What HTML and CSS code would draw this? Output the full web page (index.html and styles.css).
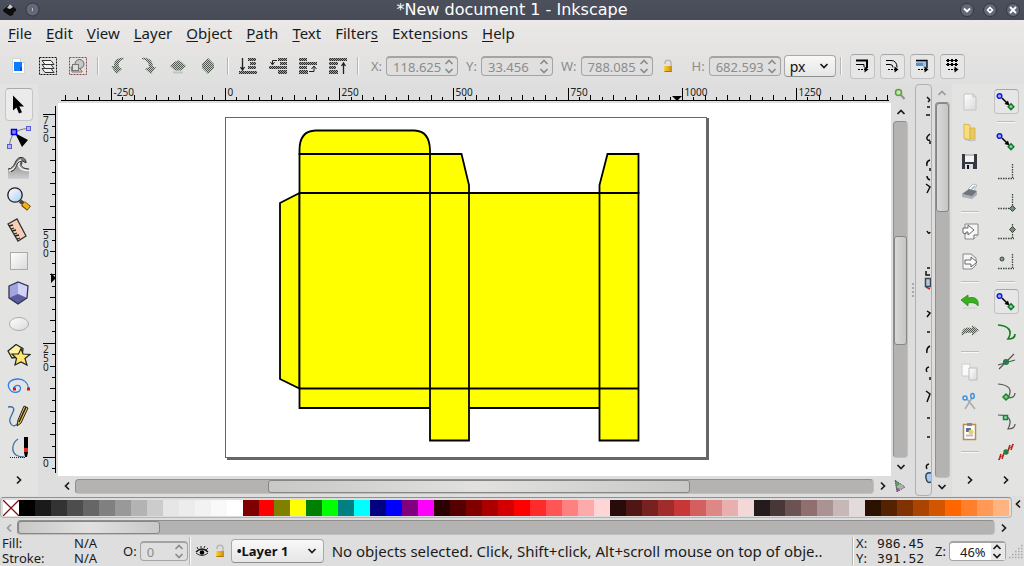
FILE: index.html
```html
<!DOCTYPE html>
<html lang="en">
<head>
<meta charset="utf-8">
<title>*New document 1 - Inkscape</title>
<link rel="stylesheet" href="styles.css">
</head>
<body>
<svg class="defs" aria-hidden="true">
  <defs>
    <pattern id="dither" width="2" height="2" patternUnits="userSpaceOnUse"><rect width="2" height="2" fill="#c6c8c6"/><rect width="1" height="1" fill="#505850"/><rect x="1" y="1" width="1" height="1" fill="#505850"/></pattern>
    <pattern id="ditherDark" width="2" height="2" patternUnits="userSpaceOnUse"><rect width="2" height="2" fill="#9a9a9a"/><rect width="1" height="1" fill="#2c2c2c"/><rect x="1" y="1" width="1" height="1" fill="#2c2c2c"/></pattern>
    <linearGradient id="gold" x1="0" x2="1"><stop offset="0" stop-color="#f7d34a"/><stop offset="1" stop-color="#d08a00"/></linearGradient>
    <linearGradient id="glass" x1="0" y1="0" x2="1" y2="1"><stop offset="0" stop-color="#ffffff"/><stop offset="1" stop-color="#a9cdf2"/></linearGradient>
    <linearGradient id="paper" x1="0" y1="0" x2="1" y2="1"><stop offset="0" stop-color="#ffffff"/><stop offset="1" stop-color="#d9d9d9"/></linearGradient>
    <linearGradient id="wave" x1="0" y1="0" x2="0" y2="1"><stop offset="0" stop-color="#777"/><stop offset="1" stop-color="#d0d0d0"/></linearGradient>
    <symbol id="up" viewBox="0 0 10 8"><path d="M1.500 6L5 2.500 8.500 6" fill="none" stroke="currentColor" stroke-width="1.700"/></symbol>
    <symbol id="down" viewBox="0 0 10 8"><path d="M1.500 2L5 5.500 8.500 2" fill="none" stroke="currentColor" stroke-width="1.700"/></symbol>
    <symbol id="left" viewBox="0 0 8 10"><path d="M6 1.500L2.500 5 6 8.500" fill="none" stroke="currentColor" stroke-width="1.700"/></symbol>
    <symbol id="right" viewBox="0 0 8 10"><path d="M2 1.500L5.500 5 2 8.500" fill="none" stroke="currentColor" stroke-width="1.700"/></symbol>
    <symbol id="lock" viewBox="0 0 10 14"><path d="M2 5V4a3 2.700 0 0 1 6 0V7" fill="none" stroke="#b9b9b0" stroke-width="1.500"/><rect x="1" y="7" width="8" height="6" fill="url(#gold)"/><path d="M1.500 12.500h7" stroke="#b37400"/></symbol>
    <symbol id="snap" viewBox="0 0 24 24"><path d="M8 8l5 5" stroke="#000" stroke-width="1.500"/><path d="M15.500 15.500l-5-1.500 3.500-3.500z"/><circle cx="5.500" cy="6" r="2.300" fill="#9db4f5" stroke="#1a1ae0" stroke-width="1.500"/><path d="M17 13.800l2.800 2.900L17 19.600l-2.800-2.900z" fill="#8fd3a0" stroke="#0c7a28" stroke-width="1.500"/></symbol>
    <symbol id="corner" viewBox="0 0 24 24"><path d="M4 18.500h16M18.500 4v15" fill="none" stroke="#3c4a3c" stroke-width="1.300" stroke-dasharray="1.500 1"/></symbol>
  </defs>
</svg>

<div class="window">
  <header class="title-bar">
    <div class="title-left">
      <svg width="40" height="20"><path d="M10 4l6 5q1 2-2 3l-1 3-3 1-3-2-3-2q-2-2 0-3z" fill="#0d0d0d"/><path d="M10 4l3 3-3 2-3-1z" fill="#c8c8c8"/><circle cx="32.500" cy="9.500" r="6.500" fill="#636979" stroke="#333743"/><path d="M32.500 8v3" stroke="#b8bcc8"/></svg>
    </div>
    <h1>*New document 1 - Inkscape</h1>
    <div class="title-right">
      <button aria-label="Minimize"><svg width="16" height="16"><circle cx="8" cy="8" r="6.500" fill="#636979" stroke="#333743"/><path d="M5 6.500l3 3 3-3" fill="none" stroke="#fff" stroke-width="1.800"/></svg></button>
      <button aria-label="Maximize"><svg width="16" height="16"><circle cx="8" cy="8" r="6.500" fill="#636979" stroke="#333743"/><path d="M8 5.500l2.500 2.500L8 10.500 5.500 8z" fill="none" stroke="#fff" stroke-width="1.600"/></svg></button>
      <button aria-label="Close"><svg width="16" height="16"><circle cx="8" cy="8" r="6.500" fill="#636979" stroke="#333743"/><path d="M5 5l6 6M11 5l-6 6" stroke="#fff" stroke-width="1.800"/></svg></button>
    </div>
  </header>

  <nav class="menu-bar">
    <button><u>F</u>ile</button><button><u>E</u>dit</button><button><u>V</u>iew</button><button><u>L</u>ayer</button><button><u>O</u>bject</button><button><u>P</u>ath</button><button><u>T</u>ext</button><button>Filter<u>s</u></button><button>Exte<u>n</u>sions</button><button><u>H</u>elp</button>
  </nav>

  <div class="toolbar">
    <div class="group">
      <button aria-label="Select all"><svg width="24" height="24"><path d="M6.500 4.500h8l4 4v11h-12z" fill="#fff" stroke="#d5d5d5"/><path d="M14.500 4.500v4h4" fill="#eee" stroke="#ccc"/><rect x="8" y="8" width="8" height="9" fill="#0a7cff"/><path d="M14 13h2v4h-2z" fill="#0050d0"/></svg></button>
      <button aria-label="Select all in all layers"><svg width="24" height="24"><rect x="3.500" y="3.500" width="17" height="17" fill="none" stroke="#111" stroke-dasharray="2 1"/><path d="M6 14.500h9l3 4H9z" fill="#eee" stroke="#333"/><path d="M6 10.500h9l3 4H9z" fill="#eee" stroke="#333"/><path d="M6 6.500h9l3 4H9z" fill="#f6f6f6" stroke="#333"/></svg></button>
      <button aria-label="Deselect"><svg width="24" height="24"><rect x="3.500" y="3.500" width="17" height="17" fill="none" stroke="#8a4a4a" stroke-dasharray="2 1"/><path d="M5 13l6-1 5 5v1H6z" fill="#d8cfae" stroke="#777"/><circle cx="13.500" cy="10" r="4.500" fill="#c4c8cc" stroke="#666"/><rect x="6.500" y="10.500" width="6" height="6" fill="#ddd" stroke="#777"/></svg></button>
    </div>
    <span class="rule"></span>
    <div class="group">
      <button aria-label="Rotate left"><svg width="24" height="24"><path d="M18 4c-7-1-10 3-10 8H5l5.500 8 5.500-5-3-2c-1-4 1-7 5-8z" fill="url(#dither)"/></svg></button>
      <button aria-label="Rotate right"><svg width="24" height="24"><path d="M6 4c7-1 11 3 11 9h3l-5 7-6-5 4-2c0-4-2-7-7-8z" fill="url(#dither)"/></svg></button>
      <button aria-label="Flip horizontal"><svg width="24" height="24"><path d="M4 12l5-4.500h6l5 4.500-5 4.500H9z" fill="url(#dither)"/><path d="M12 6l4 3H8z" fill="url(#dither)"/><path d="M7 18.500h10" stroke="#c4c4c4" stroke-width="2"/></svg></button>
      <button aria-label="Flip vertical"><svg width="24" height="24"><path d="M12 4l6 6v4l-6 6-6-6v-4z" fill="url(#dither)"/></svg></button>
    </div>
    <span class="rule"></span>
    <div class="group">
      <button aria-label="Lower to bottom"><svg width="24" height="24"><path d="M6.500 4v11M4.500 13l2 3 2-3" fill="none" stroke="#222" stroke-width="1.300"/><path d="M12 4h8v3h-8zM14 8h6v3h-6zM12 12h8v3h-8z" fill="url(#ditherDark)"/><path d="M3 17h18v3H3z" fill="url(#ditherDark)"/></svg></button>
      <button aria-label="Lower"><svg width="24" height="24"><path d="M12 4h9v3h-9zM14 8h7v3h-7zM3 12h18v3H3zM12 16h9v4h-9z" fill="url(#ditherDark)"/><path d="M11 6.500H6.500V10M4.500 8l2 3 2-3" fill="none" stroke="#222"/></svg></button>
      <button aria-label="Raise"><svg width="24" height="24"><path d="M3 4h8v3H3zM3 8h18v3H3zM3 12h8v3H3zM3 16h9v4H3z" fill="url(#ditherDark)"/><path d="M13 17.500h5V13M15.500 15l2.500-3 2.500 3" fill="none" stroke="#222"/></svg></button>
      <button aria-label="Raise to top"><svg width="24" height="24"><path d="M3 4h18v3H3zM3 8h9v3H3zM3 12h7v3H3zM3 16h9v4H3z" fill="url(#ditherDark)"/><path d="M17.500 20V9M15.500 12l2-3 2 3" fill="none" stroke="#222" stroke-width="1.300"/></svg></button>
    </div>
    <span class="rule"></span>
    <label class="field dim">X: <span class="spin"><input value="118.625" disabled><span class="arrows"><svg><use href="#up"/></svg><svg><use href="#down"/></svg></span></span></label>
    <label class="field dim">Y: <span class="spin"><input value="33.456" disabled><span class="arrows"><svg><use href="#up"/></svg><svg><use href="#down"/></svg></span></span></label>
    <label class="field dim">W: <span class="spin"><input value="788.085" disabled><span class="arrows"><svg><use href="#up"/></svg><svg><use href="#down"/></svg></span></span></label>
    <button class="lock" aria-label="Lock ratio"><svg width="10" height="14"><use href="#lock"/></svg></button>
    <label class="field dim">H: <span class="spin"><input value="682.593" disabled><span class="arrows"><svg><use href="#up"/></svg><svg><use href="#down"/></svg></span></span></label>
    <span class="combo units"><select aria-label="Units"><option>px</option></select><svg width="10" height="8"><use href="#down"/></svg></span>
    <span class="rule"></span>
    <div class="toggles">
      <button aria-label="Scale stroke width"><svg width="24" height="24"><path d="M6 6.500h11V14" fill="none" stroke="#000" stroke-width="2"/><path d="M6 10.500h8V13" fill="none" stroke="#000"/><path d="M8 15.500h7" stroke="#000" stroke-dasharray="2 1"/><path d="M14.500 12.500l4 3-4 3z"/></svg></button>
      <button aria-label="Scale corners"><svg width="24" height="24"><path d="M6 6.500h5q6 0 6 7M6 10.500h4q3 0 3 3" fill="none" stroke="#000"/><path d="M8 15.500h7" stroke="#000" stroke-dasharray="2 1"/><path d="M14.500 12.500l4 3-4 3z"/></svg></button>
      <button aria-label="Move gradients"><svg width="24" height="24"><path d="M6 6h11v8h-4v-2H6z" fill="#9fc1e4"/><path d="M6 9h7v3H6z" fill="#5d8fc2"/><path d="M6 6.500h11V14" fill="none" stroke="#000" stroke-width="1.300"/><path d="M8 15.500h7" stroke="#000" stroke-dasharray="2 1"/><path d="M14.500 12.500l4 3-4 3z"/></svg></button>
      <button aria-label="Move patterns"><svg width="24" height="24"><path d="M6 6.500h12M6 10.500h12" stroke="#000"/><path d="M8 5v7M12 5v7M16 5v7" stroke="#000" stroke-width="2" stroke-dasharray="3 1"/><path d="M8 15.500h7" stroke="#000" stroke-dasharray="2 1"/><path d="M14.500 12.500l4 3-4 3z"/></svg></button>
    </div>
  </div>

  <main class="main">
    <aside class="toolbox">
      <div class="tools">
        <button class="active" aria-label="Selector"><svg width="24" height="24"><path d="M6 2.500v15l3.500-3 2.500 6 3-1.300-2.700-5.700H17z"/></svg></button>
        <button aria-label="Node"><svg width="24" height="24"><path d="M2.500 21C3 11 8 4 21 3.500" fill="none" stroke="#777"/><path d="M8 8l13 7-6 7z"/><g fill="#b5b8ff" stroke="#5a5ad8"><rect x=".5" y="19.500" width="4" height="4"/><rect x="19.500" y="1.500" width="4" height="4"/></g><rect x="4.500" y="4.500" width="5" height="5" fill="#7d88ff" stroke="#0000e0" stroke-width="1.500"/></svg></button>
        <button aria-label="Tweak"><svg width="24" height="24"><path d="M1 13c8 1 6-11 13-11 4 0 5 3 5 5l-4-2 1 3c-4 0-3 5 6 5v10H1z" fill="url(#wave)"/><path d="M2 14.500c9-1 7-10 12-10.500M14 5c-4 4-3 9 8 9.500" fill="none" stroke="#f4f4f4" stroke-width="1.500"/><path d="M1 13c8 0 6-11.500 13-11.500 4 0 5 3 5 5.500l-3-2c-3 0-4 8 6 8M4 15.500c7-2 4-10 10-10" fill="none" stroke="#222"/></svg></button>
        <button aria-label="Zoom"><svg width="24" height="24"><path d="M13 14l4 3" stroke="#444" stroke-width="4"/><path d="M16 16.500l6 5" stroke="#6b4900" stroke-width="6"/><path d="M16.500 16.500l5 4.500" stroke="#f6b21e" stroke-width="4"/><circle cx="8" cy="8" r="7.200" fill="url(#glass)" stroke="#222" stroke-width="1.300"/></svg></button>
        <button aria-label="Measure"><svg width="24" height="24"><path d="M1 6l9-5 9 17-8 5z" fill="#f8cdb8" stroke="#333" stroke-width="1.300"/><path d="M2 8l4-1M4 11l3-1M5 13l4-1M7 16l3-1M8 18l4-1M10 21l3-1" stroke="#222" stroke-width="1.300"/></svg></button>
        <button aria-label="Rectangle"><svg width="24" height="24"><rect x="3.500" y="3.500" width="17" height="17" fill="url(#paper)" stroke="#aaa"/></svg></button>
        <button aria-label="3D box"><svg width="24" height="24"><path d="M2 5l9-4 10 4-1 12-9 6-9-6z" fill="#a3a5de"/><path d="M11 1l10 4-1 12-9-4z" fill="#d2d3f8"/><path d="M2 17l9-4 9 4-9 6z" fill="#5b5c9e"/><path d="M2 5l9-4 10 4-1 12-9 6-9-6z" fill="none" stroke="#333355" stroke-width="1.300"/></svg></button>
        <button aria-label="Ellipse"><svg width="24" height="24"><ellipse cx="12" cy="12" rx="9.500" ry="6.500" fill="url(#paper)" stroke="#aaa"/></svg></button>
        <button aria-label="Star"><svg width="24" height="24"><path d="M1 8l8-6.500 7 4-1 8-10 1.500z" fill="#fff3a0" stroke="#222" stroke-width="1.300"/><path d="M14 5.500l2 5.500 7 .5-5 4 2 6.500-6-3-6 3 1.500-6.500L5 11h6.500z" fill="#ffe66e" stroke="#222" stroke-width="1.200"/></svg></button>
        <button aria-label="Spiral"><svg width="24" height="24"><path d="M7 16c-2-4 6-7 6.500-2 0 5-8 6-11 1C-1 9 4 5 11 5c6 0 10 4 10.500 9" fill="none" stroke="#2f7ff0" stroke-width="1.300"/><path d="M6 13.500h3v3H6zM20 13.500h3v3h-3z" fill="#d01818"/></svg></button>
        <button aria-label="Pencil"><svg width="24" height="24"><path d="M1 2c5-1 7 1 5 5-2 5-5 8-2 12 2 3 5 2 7-1" fill="none" stroke="#3b6ea5" stroke-width="1.300"/><path d="M17 1l4 2-7 15-4 3 1-6z" fill="#f0c64a" stroke="#222"/><path d="M19 2l-7 15" stroke="#222" stroke-width="1.500"/></svg></button>
        <button aria-label="Calligraphy"><svg width="24" height="24"><path d="M11 3C5 7 4 15 9 19c3 2 5 2 8 2" fill="none" stroke="#3b6ea5" stroke-width="1.300"/><rect x="17" y="1" width="4" height="12"/><rect x="17" y="12" width="4" height="4" fill="#e02828"/><path d="M17 16h4l-1 5h-2z"/><path d="M3 21.500h15" stroke="#222" stroke-dasharray="1 1"/></svg></button>
      </div>
      <button class="more" aria-label="More tools"><svg width="8" height="10"><use href="#right"/></svg></button>
    </aside>

    <section class="editor">
      <div class="ruler-corner"></div>
      <svg class="h-ruler"><g id="hTicks" transform="translate(-58 -84)"><path d="M61 100.500h828" stroke="#000"/><path d="M672 96h10l-5 5z"/></g></svg>
      <button class="zoom-toggle" aria-label="Zoom on resize"><svg width="12" height="12"><circle cx="4.500" cy="4.500" r="3" fill="#c5e6b3" stroke="#58a03b" stroke-width="1.500"/><path d="M7 7l3.500 4" stroke="#8c929c" stroke-width="2"/></svg></button>
      <svg class="v-ruler"><g id="vTicks" transform="translate(-38 -103)"><path d="M55.500 106v367" stroke="#000"/><path d="M51 273v10l5-5z"/></g></svg>
      <svg class="canvas"><g transform="translate(-58 -103)">
        <path d="M227 118h482v342H227z" fill="#666"/>
        <rect x="225.500" y="117.500" width="481" height="340" fill="#fff" stroke="#666"/>
        <g fill="#ff0" stroke="#000" stroke-width="1.800">
          <path d="M299.500 154v-4q0-19 16-19.500h99q15 .5 15.500 19.500v4z"/>
          <path d="M299.500 154h130.500v39H299.500zM430 154h31.500l7.500 31v8h-39zM638.500 154h-31l-8 31v8h39zM299.500 193L280 203v176l19.500 9.500z"/>
          <path d="M299.500 193H430v195.500H299.500zM430 193h39v195.500h-39zM469 193h130.500v195.500H469zM599.500 193h39v195.500h-39zM299.500 388.500H430V408H299.500zM469 388.500h130.500V408H469zM430 388.500h39v52h-39zM599.500 388.500h39v52h-39z"/>
        </g>
      </g></svg>
      <div class="scroll vertical">
        <button aria-label="Scroll up"><svg width="10" height="8"><use href="#up"/></svg></button>
        <div class="trough"><i style="flex:116"></i><b style="flex:108"></b><i style="flex:114"></i></div>
        <button aria-label="Scroll down"><svg width="10" height="8"><use href="#down"/></svg></button>
      </div>
      <div></div>
      <div class="scroll horizontal">
        <button aria-label="Scroll left"><svg width="8" height="10"><use href="#left"/></svg></button>
        <div class="trough"><i style="flex:193"></i><b style="flex:421"></b><i style="flex:184"></i></div>
        <button aria-label="Scroll right"><svg width="8" height="10"><use href="#right"/></svg></button>
      </div>
      <button class="cms" aria-label="Colour management"><svg width="12" height="12"><path d="M1 0l10 7-8 5z" fill="#a9b5b0"/><path d="M1 0l5 4-4 3z" fill="#4fa25b"/><path d="M2 7l4 2-3 3z" fill="#b04aa0"/><path d="M1 0l10 7-8 5z" fill="none" stroke="#444" stroke-dasharray="1 1"/></svg></button>
    </section>

    <aside class="dock">
      <div class="grip"></div>
      <div class="panel"><svg><g transform="translate(-916 -84)" fill="none" stroke="#111" stroke-width="1.500">
        <path d="M927 96l3 3M928 101l2-2M927 106h3M926 114h4M930 133q-4 3-3 5t3 1M930 140v3M930 159q-4 1-3 6M930 167v3M927 175q0 3 3 4M926 183l4 3-3 6M927 230q2 4 3 1M926 270v4h4M927 267h3M927 310l3 2-3 4M927 331h3M930 345q-4 2-3 7M929 366q-4 1-2 5M930 376v3M926 390l4 3-3 8M927 417h3M927 436h3M929 463q-4 1-2 5"/>
        <path d="M926 286l4 2" stroke="#c02020"/>
        <path d="M925.500 277.500h5v8h-5z" fill="#a6cbef" stroke="#444"/><path d="M931 472q-6-1-5 5t5 4" fill="#a6cbef" stroke="#345"/>
      </g></svg></div>
      <div class="scroll vertical">
        <button class="faint" aria-label="Scroll up"><svg width="10" height="8"><use href="#up"/></svg></button>
        <div class="trough"><b style="flex:109"></b><i style="flex:270"></i></div>
        <button aria-label="Scroll down"><svg width="10" height="8"><use href="#down"/></svg></button>
      </div>
    </aside>

    <aside class="side-bar">
      <button aria-label="New"><svg width="24" height="24"><path d="M6 4h9l3 3v13H6z" fill="url(#paper)" stroke="#c4c4c4"/><path d="M15 4v3h3" fill="none" stroke="#c4c4c4"/></svg></button>
      <button aria-label="Open"><svg width="24" height="24"><path d="M6 4l6 1v15l-6-2z" fill="#f7dd7d" stroke="#d9b94e"/><path d="M12 8h5v11h-5z" fill="#e9c860" stroke="#d9b94e"/><path d="M6 19l6 2 6-1" fill="none" stroke="#bbb"/></svg></button>
      <button aria-label="Save"><svg width="24" height="24"><path d="M4 4h15v15H4z" fill="#333842"/><path d="M7 4h9v8H7z" fill="#f2f2f2"/><path d="M7 5h9" stroke="#888"/><path d="M7 14h8v5H7z" fill="#d9dde3"/><path d="M9 15h2v4H9z" fill="#111"/></svg></button>
      <button aria-label="Print"><svg width="24" height="24"><path d="M10 9l5-5 4 1-3 6z" fill="#f8f8f8" stroke="#bbb"/><path d="M4 14l7-5 8 2-4 6z" fill="#6e767c"/><path d="M4 14l10 2 5-5v4l-5 4-10-2z" fill="#a9afb4"/><path d="M13 10l4-4" stroke="#8fb4d0" stroke-width="1.500"/></svg></button>
      <hr>
      <button aria-label="Import"><svg width="24" height="24"><path d="M7 4h13v11l-4 4H7z" fill="#f5f5f5" stroke="#888"/><path d="M16 19v-4h4" fill="#fff" stroke="#666"/><path d="M5 13V8h5V5l6 5-6 5v-3H8v2z" fill="#fff" stroke="#666"/></svg></button>
      <button aria-label="Export"><svg width="24" height="24"><path d="M5 4h8l5 4v7l-4 4H5z" fill="#f5f5f5" stroke="#888"/><path d="M7 10h6V7l6 5-6 5v-3H7z" fill="#fff" stroke="#666"/></svg></button>
      <hr>
      <button aria-label="Undo"><svg width="24" height="24"><path d="M3 10l7-5v3c8-2 11 2 10 8-2-3-5-4-10-3v3z" fill="#37b21c" stroke="#2a8a17" stroke-width=".8"/><path d="M5 18h14" stroke="#ccc"/></svg></button>
      <button aria-label="Redo"><svg width="24" height="24"><path d="M21 10l-7-5v3C6 6 3 10 4 16c2-3 5-4 10-3v3z" fill="url(#dither)"/></svg></button>
      <hr>
      <button aria-label="Copy"><svg width="24" height="24"><path d="M4 4h8v12H4z" fill="#fafafa" stroke="#ccc"/><path d="M11 8h8v12h-8z" fill="url(#paper)" stroke="#bbb"/></svg></button>
      <button aria-label="Cut"><svg width="24" height="24"><path d="M14 8L7 19M9 9l8 10" stroke="#aaa" stroke-width="1.500"/><circle cx="7" cy="8" r="2" fill="none" stroke="#3f92dd" stroke-width="1.500"/><ellipse cx="14.500" cy="6" rx="1.700" ry="2.500" fill="none" stroke="#3f92dd" stroke-width="1.500"/></svg></button>
      <button aria-label="Paste"><svg width="24" height="24"><rect x="5.500" y="4.500" width="12" height="15" fill="#fff" stroke="#b98b56" stroke-width="1.500"/><rect x="9" y="3" width="5" height="3" fill="#888"/><rect x="8" y="8" width="5" height="4" fill="#57728f"/><circle cx="13" cy="12" r="2.500" fill="#ead064"/><path d="M8 15.500h7" stroke="#bbb" stroke-width="2"/></svg></button>
      <hr>
      <button class="more" aria-label="More commands"><svg width="8" height="10"><use href="#right"/></svg></button>
    </aside>

    <aside class="side-bar snap">
      <button class="on" aria-label="Enable snapping"><svg width="24" height="24"><use href="#snap"/></svg></button>
      <hr>
      <button aria-label="Snap bounding boxes"><svg width="24" height="24"><use href="#snap"/></svg></button>
      <button aria-label="Snap edges"><svg width="24" height="24"><use href="#corner"/></svg></button>
      <button aria-label="Snap corners"><svg width="24" height="24"><use href="#corner"/><path d="M18.500 15.500l3 3-3 3-3-3z" fill="#788" stroke="#354a35"/></svg></button>
      <button aria-label="Snap edge midpoints"><svg width="24" height="24"><use href="#corner"/><path d="M18.500 6.500l3 3-3 3-3-3z" fill="#788" stroke="#354a35"/></svg></button>
      <button aria-label="Snap centres"><svg width="24" height="24"><use href="#corner"/><circle cx="8" cy="9" r="2" fill="#899" stroke="#354a35"/></svg></button>
      <hr>
      <button class="on" aria-label="Snap nodes"><svg width="24" height="24"><use href="#snap"/></svg></button>
      <button aria-label="Snap paths"><svg width="24" height="24"><path d="M4 5c11 1 15 6 10 14 5 0 7-2 7-5" fill="none" stroke="#16801e" stroke-width="1.700"/></svg></button>
      <button aria-label="Snap intersections"><svg width="24" height="24"><path d="M4 15l17-5M5 19L20 4" stroke="#555" stroke-width="1.200"/><circle cx="12" cy="12" r="2.300" fill="#55a" stroke="#138a28" stroke-width="1.500"/></svg></button>
      <button aria-label="Snap cusp nodes"><svg width="24" height="24"><path d="M4 4c11 1 15 5 10 14 5 0 7-2 7-5" fill="none" stroke="#555" stroke-width="1.200"/><path d="M12 14l3 3-3 3-3-3z" fill="#9b9" stroke="#138a28" stroke-width="1.500"/></svg></button>
      <button aria-label="Snap smooth nodes"><svg width="24" height="24"><path d="M4 5c13 0 14 6 10 14 5 0 7-2 7-5" fill="none" stroke="#555" stroke-width="1.200"/><rect x="9.500" y="5.500" width="4" height="4" fill="#9cb" stroke="#138a28" stroke-width="1.500"/></svg></button>
      <button aria-label="Snap line midpoints"><svg width="24" height="24"><path d="M4 20L20 4" stroke="#777"/><path d="M5 20l2-6M8 19l2-6M14 11l2-6M17 10l2-6" stroke="#c22222" stroke-width="1.600"/><circle cx="12" cy="12" r="2" fill="#557" stroke="#138a28" stroke-width="1.300"/></svg></button>
      <button class="more" aria-label="More snapping"><svg width="8" height="10"><use href="#right"/></svg></button>
    </aside>
  </main>

  <div class="palette">
    <div class="swatches" id="swatches"><button class="none" aria-label="No colour"><svg width="16" height="16"><path d="M0 0l16 16M16 0L0 16" stroke="#7a1010" stroke-width="1.300"/></svg></button></div>
    <button class="palette-menu" aria-label="Palette menu"><svg width="8" height="10"><use href="#left"/></svg></button>
  </div>
  <div class="scroll horizontal palette-scroll">
    <button class="faint" aria-label="Scroll left"><svg width="8" height="10"><use href="#left"/></svg></button>
    <div class="trough"><b style="flex:141"></b><i style="flex:837"></i></div>
    <button aria-label="Scroll right"><svg width="8" height="10"><use href="#right"/></svg></button>
  </div>

  <footer class="status">
    <dl class="style-info"><dt>Fill:</dt><dd>N/A</dd><dt>Stroke:</dt><dd>N/A</dd></dl>
    <label class="field opacity">O: <span class="spin dim"><input value="0" disabled><span class="arrows"><svg><use href="#up"/></svg><svg><use href="#down"/></svg></span></span></label>
    <span class="rule"></span>
    <button class="eye" aria-label="Layer visibility"><svg width="14" height="12"><path d="M1 7q6-6 12 0" fill="none" stroke="#111" stroke-width="1.300"/><path d="M1 8q6 5 12 0" fill="none" stroke="#333"/><circle cx="7" cy="7.500" r="2.300"/><path d="M3 4L2 2M6 3V1M9 3l1-2M11 5l2-2" stroke="#222"/></svg></button>
    <button class="lock" aria-label="Lock layer"><svg width="10" height="14"><use href="#lock"/></svg></button>
    <span class="combo layer"><select aria-label="Layer"><option>•Layer 1</option></select><svg width="10" height="8"><use href="#down"/></svg></span>
    <p class="message">No objects selected. Click, Shift+click, Alt+scroll mouse on top of obje..</p>
    <span class="rule"></span>
    <dl class="coords"><dt>X:</dt><dd>986.45</dd><dt>Y:</dt><dd>391.52</dd></dl>
    <label class="field zoom">Z: <span class="spin"><input value="46%"><span class="arrows"><svg><use href="#up"/></svg><svg><use href="#down"/></svg></span></span></label>
    <svg class="resize" width="16" height="16"><path d="M1 14.500h14M4 11.500h11M7 8.500h8M10 5.500h5M13 2.500h2" stroke="#a8a8a8" stroke-width="1.500" stroke-dasharray="1.500 1.500"/></svg>
  </footer>
</div>
<script src="script.js"></script>
</body>
</html>
```
FILE: styles.css
```css
* { box-sizing: border-box; }
body { margin: 0; font-family: "Noto Sans", "Open Sans", sans-serif; font-size: 13px; color: #1a1a1a; }
button { border: 0; padding: 0; background: none; font: inherit; color: inherit; display: flex; align-items: center; justify-content: center; }
svg { display: block; flex: none; }
.defs { position: absolute; width: 0; height: 0; }

.window { display: flex; flex-direction: column; height: 100vh; background: #dedede; overflow: hidden; }

.title-bar { display: grid; grid-template-columns: 1fr auto 1fr; align-items: center; height: 20px; background: linear-gradient(#4c505c, #464b57); color: #fff; }
.title-bar h1 { margin: 0; font: 16px/20px "DejaVu Sans", sans-serif; }
.title-right { display: flex; gap: 7px; justify-content: flex-end; padding-right: 3px; }

.menu-bar { display: flex; gap: 14px; height: 28px; padding: 0 0 2px 8px; background: linear-gradient(#eae9e8, #e5e4e3); font-size: 15px; }
.menu-bar button { display: block; }
.menu-bar u { text-underline-offset: 2px; text-decoration-thickness: 1px; }

.toolbar { display: flex; align-items: center; height: 36px; padding-left: 3px; background: linear-gradient(#e5e4e3, #dfdfdf); }
.group { display: flex; }
.group button { width: 30px; height: 30px; }
.rule { width: 2px; height: 18px; margin: 0 4px; background: linear-gradient(90deg, #b5b5b5 50%, #fafafa 50%); }
.field { display: flex; align-items: center; gap: 4px; margin-left: 8px; }
.dim { color: #8c8c8c; }
.spin { display: flex; width: 72px; height: 20px; border: 1px solid #a4a4a4; border-width: 2px 1px 1px; border-radius: 4px; background: #dfdfdf; }
.spin input { width: 0; flex: 1; border: 0; padding: 0 0 0 6px; background: none; color: inherit; font: inherit; outline: 0; }
.arrows { display: flex; flex-direction: column; justify-content: center; width: 14px; padding-left: 1px; gap: 1px; }
.arrows svg { width: 10px; height: 8px; }
.lock { width: 18px; height: 20px; }
.toolbar .lock { margin: 0 7px 0 6px; }
.combo { display: grid; align-items: center; border: 1px solid #a9a9a9; border-bottom-color: #8e8e8e; border-radius: 4px; background: linear-gradient(#f8f8f8, #e6e6e6); }
.combo select, .combo svg { grid-area: 1 / 1; }
.combo select { appearance: none; width: 100%; height: 100%; border: 0; padding: 0 5px; background: none; font: inherit; color: #111; }
.combo svg { justify-self: end; margin-right: 6px; pointer-events: none; }
.units { width: 52px; height: 22px; margin-left: 3px; font-size: 14px; }
.toggles { display: flex; gap: 5px; margin-left: 4px; }
.toggles button, .snap .on { width: 25px; height: 25px; border: 1px solid #c2c2c2; border-top-color: #a6a6a6; border-radius: 4px; background: #e6e6e6; }

.main { flex: 1; min-height: 0; display: grid; grid-template: minmax(0, 1fr) / 38px minmax(0, 1fr) 40px 36px 36px; }
.toolbox { display: flex; flex-direction: column; min-height: 0; padding-top: 4px; background: #e3e3e2; }
.tools { flex: 1; display: flex; flex-direction: column; align-items: center; min-height: 0; }
.tools button { flex: 1; width: 28px; min-height: 0; }
.tools .active { border: 1px solid #c6c6c6; border-top-color: #aaa; border-radius: 4px; background: #ebebeb; }
.toolbox .more { height: 32px; }

.editor { display: grid; grid-template: 19px minmax(0, 1fr) 20px / 20px minmax(0, 1fr) 21px; }
.h-ruler, .v-ruler, .canvas { width: 100%; height: 100%; overflow: hidden; }
.h-ruler text, .v-ruler text { font-size: 10px; fill: #222; }
.canvas { background: #fff; }
.zoom-toggle, .cms { width: 18px; }

.scroll { display: flex; align-items: center; }
.vertical { flex-direction: column; width: 17px; }
.vertical button { width: 17px; height: 18px; }
.editor .vertical { width: 19px; }
.horizontal button { width: 17px; height: 16px; }
.trough { flex: 1; display: flex; border: 1px solid #8f8f8f; border-right-color: #c0c0c0; border-bottom-color: #c0c0c0; border-radius: 4px; background: #b4b3b1; }
.vertical .trough { flex-direction: column; width: 15px; }
.horizontal .trough { height: 15px; }
.trough b { border: 1px solid #868686; border-radius: 3px; background: linear-gradient(90deg, #c8c8c7, #e2e1e0, #c8c8c7); }
.vertical .trough b { background: linear-gradient(90deg, #d8d8d7, #c6c6c5); }
.faint { color: #999; }

.dock { display: grid; grid-template: minmax(0, 1fr) / 3px 17px 1fr; }
.dock .scroll { justify-self: center; }
.dock .panel { overflow: hidden; border: 1px solid #b0b0b0; border-radius: 4px; }
.panel svg { width: 100%; height: 100%; }
.grip { align-self: center; height: 14px; border-left: 2px dotted #aaa; }

.side-bar { display: flex; flex-direction: column; align-items: center; padding-top: 3px; background: #e3e3e2; }
.side-bar button { flex: none; height: 30px; }
.side-bar hr { flex: none; width: 18px; height: 2px; margin: 4px 0; border: 0; background: linear-gradient(#bdbdbd 50%, #f8f8f8 50%); }
.side-bar .on { margin: 2px 0 3px; height: 25px; }
.side-bar .more { margin-top: auto; height: 28px; padding-bottom: 4px; }

.palette { display: flex; height: 23px; padding-top: 1px; }
.swatches { flex: 1; display: flex; height: 21px; padding: 2px; border: 1px solid #b4b4b4; border-top-color: #8f8f8f; border-radius: 4px; background: #dedede; overflow: hidden; }
.swatches button { flex: 1 1 16px; height: 16px; }
.swatches .none { background: #fff; overflow: hidden; }
.palette-menu { width: 12px; height: 14px; }
.palette-scroll { height: 17px; padding-right: 12px; }

.status { display: flex; align-items: center; height: 30px; }
.style-info, .coords { display: grid; margin: 0; line-height: 15px; }
.style-info { grid-template-columns: 72px auto; padding-left: 2px; }
.style-info dd, .coords dd { margin: 0; }
.opacity { margin-left: 26px; gap: 3px; }
.opacity .spin { width: 48px; }
.status .rule { height: 28px; margin: 0 1px; }
.eye { width: 20px; height: 20px; }
.status .lock { width: 16px; }
.layer { width: 93px; height: 24px; margin-left: 3px; font-weight: 700; }
.message { flex: 1; min-width: 0; margin: 0 0 0 8px; font-size: 15px; white-space: nowrap; overflow: hidden; }
.coords { grid-template-columns: 21px auto; margin-left: 1px; font-family: "DejaVu Sans Mono", monospace; }
.coords dt { font-family: "Noto Sans", sans-serif; }
.zoom { margin-left: 11px; gap: 3px; }
.zoom .spin { width: 57px; background: #fff; }
.zoom input { padding-left: 10px; }
.zoom .arrows { background: #e8e8e8; }
.resize { margin-left: 2px; }
```
FILE: script.js
```js
const NS = "http://www.w3.org/2000/svg";

function add(parent, name, attrs, text) {
  const el = document.createElementNS(NS, name);
  for (const key in attrs) el.setAttribute(key, attrs[key]);
  if (text) el.textContent = text;
  parent.appendChild(el);
}

const STEP = 11.42;
const hTicks = document.getElementById("hTicks");
for (let i = -14; i <= 58; i++) {
  const x = Math.round(225 + i * STEP) + 0.5;
  if (x < 62 || x > 889) continue;
  const major = i % 10 === 0;
  const size = major ? 12 : i % 2 ? 3 : 5;
  add(hTicks, "path", { d: `M${x} 100v-${size}`, stroke: "#000" });
  if (major) add(hTicks, "text", { x: x + 2, y: 96 }, String(i * 25));
}

const vTicks = document.getElementById("vTicks");
for (let i = -1; i <= 30; i++) {
  const y = Math.round(457 - i * STEP) + 0.5;
  const major = i % 10 === 0;
  const size = major ? 12 : i % 2 ? 3 : 5;
  add(vTicks, "path", { d: `M55 ${y}h-${size}`, stroke: "#000" });
  if (major) {
    const label = String(i * 25);
    const digits = [...label];
    add(vTicks, "text", {
      x: digits.map(() => 43).join(" "),
      y: digits.map((_, n) => y + 9 + n * 9).join(" ")
    }, label);
  }
}

const colors = ("000000 1a1a1a 333333 4d4d4d 666666 808080 999999 b3b3b3 cccccc e6e6e6 ececec f2f2f2 f9f9f9 ffffff " +
  "800000 ff0000 808000 ffff00 008000 00ff00 008080 00ffff 000080 0000ff 800080 ff00ff " +
  "2b0000 550000 800000 aa0000 d40000 ff0000 ff2a2a ff5555 ff8080 ffaaaa ffd5d5 " +
  "280b0b 501616 782121 a02c2c c83737 d35f5f de8787 e9afaf f4d7d7 " +
  "241c1c 483737 6c5353 916f6f ac9393 c8b7b7 e3dbdb " +
  "2b1100 552200 803300 aa4400 d45500 ff6600 ff7f2a ff9955 ffb380").split(" ");
const swatches = document.getElementById("swatches");
for (const color of colors) {
  const button = document.createElement("button");
  button.style.background = "#" + color;
  button.setAttribute("aria-label", "#" + color);
  swatches.appendChild(button);
}
```
